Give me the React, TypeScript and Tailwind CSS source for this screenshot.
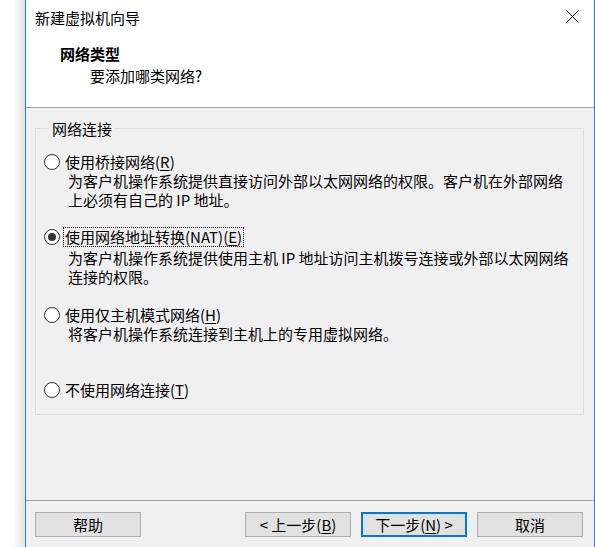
import React from "react";

const font = "font-['Noto_Sans_CJK_SC','Noto_Sans',sans-serif]";

function Key({ k }: { k: string }) {
  return (
    <>
      (<span className="underline underline-offset-2">{k}</span>)
    </>
  );
}

function Radio({ checked }: { checked?: boolean }) {
  return (
    <span className="flex h-[16px] w-[16px] shrink-0 items-center justify-center rounded-full border border-[#333333] bg-white">
      {checked && <span className="h-[8px] w-[8px] rounded-full bg-[#333333]" />}
    </span>
  );
}

function Button({
  children,
  primary,
}: {
  children: React.ReactNode;
  primary?: boolean;
}) {
  return (
    <button
      className={
        primary
          ? "flex h-[25px] w-[106px] items-center justify-center border-2 border-[#0078d7] bg-[#e1e1e1] text-[15px] leading-[19px] text-black"
          : "flex h-[25px] w-[106px] items-center justify-center border border-[#adadad] bg-[#e1e1e1] text-[15px] leading-[19px] text-black"
      }
    >
      {children}
    </button>
  );
}

export default function App() {
  return (
    <div className={`flex h-[547px] w-[595px] overflow-hidden bg-white text-black ${font}`}>
      <div className="w-[25px] shrink-0 bg-gradient-to-r from-white via-white to-[#e2e2e2]" />
      <div className="flex flex-1 flex-col border-x border-[#1c7fd6]">
        {/* title bar */}
        <div className="flex h-[34px] items-center justify-between bg-white pl-[9px] pr-[15px]">
          <span className="text-[15px] leading-[19px]">新建虚拟机向导</span>
          <svg width="13" height="13" viewBox="0 0 13 13" className="mt-[-2px]">
            <path d="M0.5 0.5 L12.5 12.5 M12.5 0.5 L0.5 12.5" stroke="#000" strokeWidth="1" />
          </svg>
        </div>

        {/* header */}
        <div className="h-[74px] border-b border-[#a0a0a0] bg-white pl-[34px] pt-[10px]">
          <div className="text-[15px] font-bold leading-[19px]">网络类型</div>
          <div className="mt-[3px] pl-[30px] text-[15px] leading-[19px]">要添加哪类网络?</div>
        </div>

        {/* body */}
        <div className="h-[393px] border-b border-[#a0a0a0] bg-[#f0f0f0] pl-[9px] pr-[10px] pt-[11px]">
          <fieldset className="border border-[#dcdcdc] pb-[15px] pl-[8px] pr-[8px]">
            <legend className="ml-[5px] px-[3px] text-[15px] leading-[19px]">网络连接</legend>
            <div className="flex flex-col pt-[14px] text-[15px] leading-[19px]">
              <div className="flex h-[19px] items-center gap-[5px]">
                <Radio />
                <span>
                  使用桥接网络<Key k="R" />
                </span>
              </div>
              <div className="pl-[24px]">
                为客户机操作系统提供直接访问外部以太网网络的权限。客户机在外部网络
                <br />
                上必须有自己的 IP 地址。
              </div>

              <div className="mt-[18px] flex h-[19px] items-center gap-[3px]">
                <Radio checked />
                <span className="border border-dotted border-black px-[1px] leading-[18px]">
                  使用网络地址转换(NAT)<Key k="E" />
                </span>
              </div>
              <div className="mt-[2px] pl-[24px]">
                为客户机操作系统提供使用主机 IP 地址访问主机拨号连接或外部以太网网络
                <br />
                连接的权限。
              </div>

              <div className="mt-[19px] flex h-[19px] items-center gap-[5px]">
                <Radio />
                <span>
                  使用仅主机模式网络<Key k="H" />
                </span>
              </div>
              <div className="pl-[24px]">将客户机操作系统连接到主机上的专用虚拟网络。</div>

              <div className="mt-[37px] flex h-[19px] items-center gap-[5px]">
                <Radio />
                <span>
                  不使用网络连接<Key k="T" />
                </span>
              </div>
            </div>
          </fieldset>
        </div>

        {/* footer buttons */}
        <div className="flex flex-1 items-start bg-[#f0f0f0] pl-[9px] pr-[11px] pt-[11px]">
          <Button>帮助</Button>
          <div className="flex-1" />
          <div className="flex gap-[10px]">
            <Button>
              &lt; 上一步<Key k="B" />
            </Button>
            <Button primary>
              下一步<Key k="N" /> &gt;
            </Button>
            <Button>取消</Button>
          </div>
        </div>
      </div>
    </div>
  );
}
